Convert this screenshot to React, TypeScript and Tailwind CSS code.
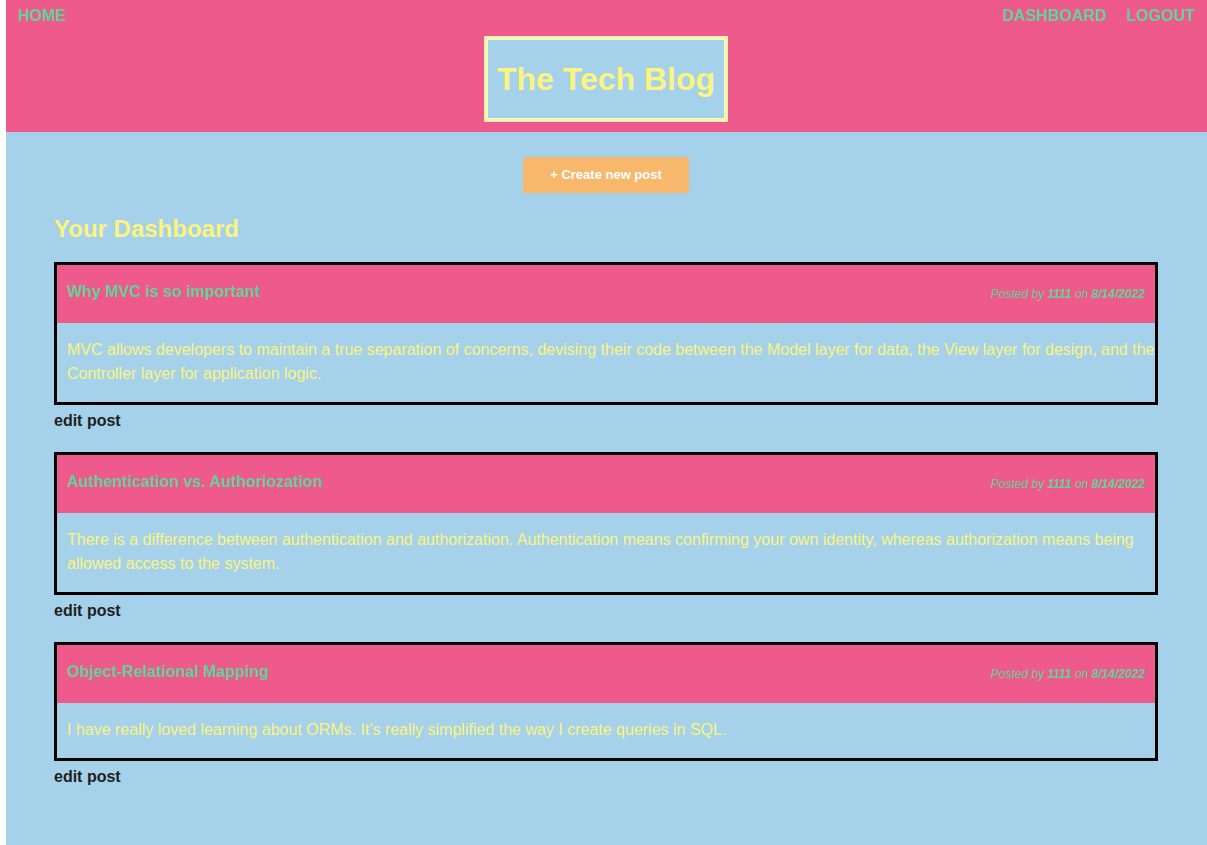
const posts = [
  {
    title: 'Why MVC is so important',
    body: 'MVC allows developers to maintain a true separation of concerns, devising their code between the Model layer for data, the View layer for design, and the Controller layer for application logic.',
  },
  {
    title: 'Authentication vs. Authoriozation',
    body: 'There is a difference between authentication and authorization. Authentication means confirming your own identity, whereas authorization means being allowed access to the system.',
  },
  {
    title: 'Object-Relational Mapping',
    body: "I have really loved learning about ORMs. It's really simplified the way I create queries in SQL.",
  },
];

function PostCard({ title, body }: { title: string; body: string }) {
  return (
    <div>
      <div className="border-[3px] border-black">
        <div className="flex h-[58px] items-center justify-between bg-[#ef5a8c] px-[10px]">
          <h3 className="-mt-[4px] text-[16px] font-bold text-[#62d198]">{title}</h3>
          <p className="text-[12px] italic text-[#62d198]">
            Posted by <span className="font-bold">1111</span> on{' '}
            <span className="font-bold">8/14/2022</span>
          </p>
        </div>
        <p className="pb-[16px] pl-[10px] pt-[15px] text-[16px] leading-[24px] text-[#fbf47e]">
          {body}
        </p>
      </div>
      <p className="mt-[4px] text-[16px] font-bold leading-[24px] text-[#1f1f1f]">edit post</p>
    </div>
  );
}

export default function App() {
  return (
    <div
      className="min-h-[845px] bg-white pl-[6px]"
      style={{ fontFamily: '"Liberation Sans", Arial, sans-serif' }}
    >
      <div className="min-h-[845px] bg-[#a5d1ea]">
        <header className="h-[132px] bg-[#ef5a8c]">
          <nav className="flex items-center justify-between px-3 pt-1 text-[16px] font-bold leading-[24px] text-[#62d198]">
            <a>HOME</a>
            <div className="flex gap-5">
              <a>DASHBOARD</a>
              <a>LOGOUT</a>
            </div>
          </nav>
          <div className="mt-2 flex justify-center pr-px">
            <div className="border border-[#fbf47e] bg-[#f4f8e8] p-px">
              <div className="border border-[#fbf47e] bg-[#eef6f0] p-px">
                <div className="flex h-[78px] w-[236px] items-center justify-center bg-[#a5d1ea]">
                  <h1 className="text-[32px] font-bold text-[#fbf47e]">The Tech Blog</h1>
                </div>
              </div>
            </div>
          </div>
        </header>

        <main className="pb-12 pl-12 pr-[49px]">
          <div className="mt-[25px] flex justify-center">
            <button className="h-[36px] w-[166px] rounded bg-[#f8b86b] text-[13px] font-bold text-white">
              + Create new post
            </button>
          </div>
          <h2 className="mt-[22px] text-[24px] font-bold leading-[28px] text-[#fbf47e]">
            Your Dashboard
          </h2>
          <div className="mt-[19px] flex flex-col gap-[19px]">
            {posts.map((p) => (
              <PostCard key={p.title} title={p.title} body={p.body} />
            ))}
          </div>
        </main>
      </div>
    </div>
  );
}
